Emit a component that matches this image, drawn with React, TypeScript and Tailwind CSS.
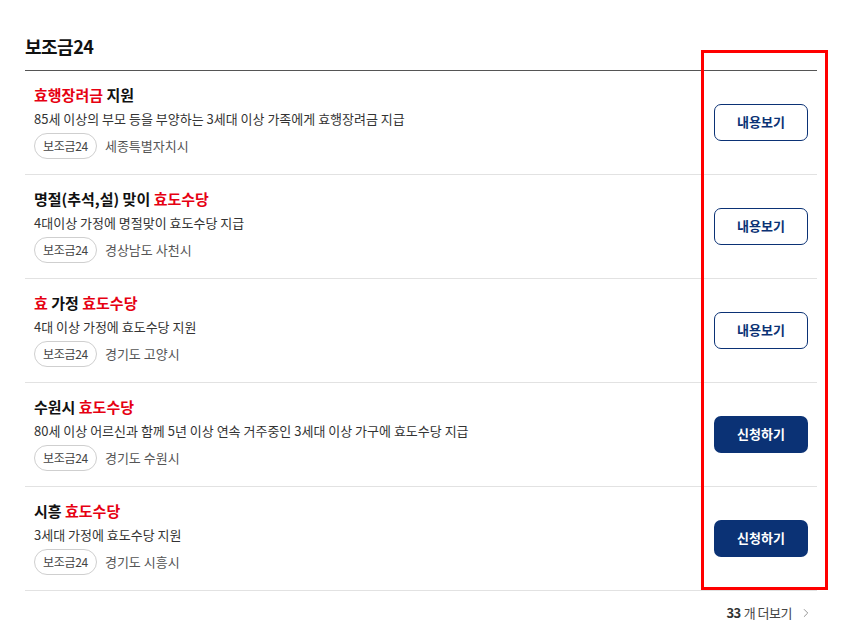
import { ChevronRight } from 'lucide-react';

type Part = { text: string; red?: boolean };

interface Item {
  title: Part[];
  desc: string;
  region: string;
  action: 'view' | 'apply';
}

const ITEMS: Item[] = [
  {
    title: [{ text: '효행장려금', red: true }, { text: ' 지원' }],
    desc: '85세 이상의 부모 등을 부양하는 3세대 이상 가족에게 효행장려금 지급',
    region: '세종특별자치시',
    action: 'view',
  },
  {
    title: [{ text: '명절(추석,설) 맞이 ' }, { text: '효도수당', red: true }],
    desc: '4대이상 가정에 명절맞이 효도수당 지급',
    region: '경상남도 사천시',
    action: 'view',
  },
  {
    title: [{ text: '효', red: true }, { text: ' 가정 ' }, { text: '효도수당', red: true }],
    desc: '4대 이상 가정에 효도수당 지원',
    region: '경기도 고양시',
    action: 'view',
  },
  {
    title: [{ text: '수원시 ' }, { text: '효도수당', red: true }],
    desc: '80세 이상 어르신과 함께 5년 이상 연속 거주중인 3세대 이상 가구에 효도수당 지급',
    region: '경기도 수원시',
    action: 'apply',
  },
  {
    title: [{ text: '시흥 ' }, { text: '효도수당', red: true }],
    desc: '3세대 가정에 효도수당 지원',
    region: '경기도 시흥시',
    action: 'apply',
  },
];

export default function App() {
  return (
    <div className="relative min-h-[640px] bg-white px-[25px] pt-[33px] font-['Noto_Sans_CJK_KR','Noto_Sans',sans-serif] text-[#222]">
      <h2 className="pb-[11px] text-[18px] font-bold leading-[26px] tracking-[-0.5px] text-[#111]">
        보조금24
      </h2>
      <ul className="w-[792px] border-t border-[#555]">
        {ITEMS.map((item, i) => (
          <li
            key={i}
            className="flex items-center justify-between border-b border-[#e2e2e2] px-[9px] pt-[14px] pb-[15px]"
          >
            <div className="flex flex-col">
              <p className="text-[15px] font-bold leading-[20px] text-[#111]">
                {item.title.map((p, j) => (
                  <span key={j} className={p.red ? 'text-[#e60012]' : ''}>
                    {p.text}
                  </span>
                ))}
              </p>
              <p className="mt-[4px] text-[13px] leading-[20px] text-[#333]">{item.desc}</p>
              <div className="mt-[4px] flex items-center gap-[8px]">
                <span className="flex h-[26px] items-center rounded-full border border-[#cfcfcf] px-[8px] text-[12px] tracking-[-0.3px] text-[#444]">
                  보조금24
                </span>
                <span className="text-[13px] text-[#555]">{item.region}</span>
              </div>
            </div>
            {item.action === 'view' ? (
              <button className="flex h-[37px] w-[94px] items-center justify-center rounded-[7px] border border-[#0b3275] bg-white text-[13px] font-bold text-[#0b3275]">
                내용보기
              </button>
            ) : (
              <button className="flex h-[37px] w-[94px] items-center justify-center rounded-[7px] bg-[#0b3275] text-[13px] font-bold text-white">
                신청하기
              </button>
            )}
          </li>
        ))}
      </ul>
      <div className="flex w-[792px] items-center justify-end pt-[12px] pr-[4px] text-[13px] tracking-[-0.5px]">
        <span className="font-bold text-[#333]">33</span>
        <span className="ml-[3px] text-[#444]">개 더보기</span>
        <ChevronRight className="ml-[7px] h-[14px] w-[14px] text-[#888]" strokeWidth={1.5} />
      </div>
      {/* annotation box */}
      <div className="pointer-events-none absolute top-[50px] left-[701px] h-[540px] w-[127px] border-[3px] border-[#ff0000]" />
    </div>
  );
}
